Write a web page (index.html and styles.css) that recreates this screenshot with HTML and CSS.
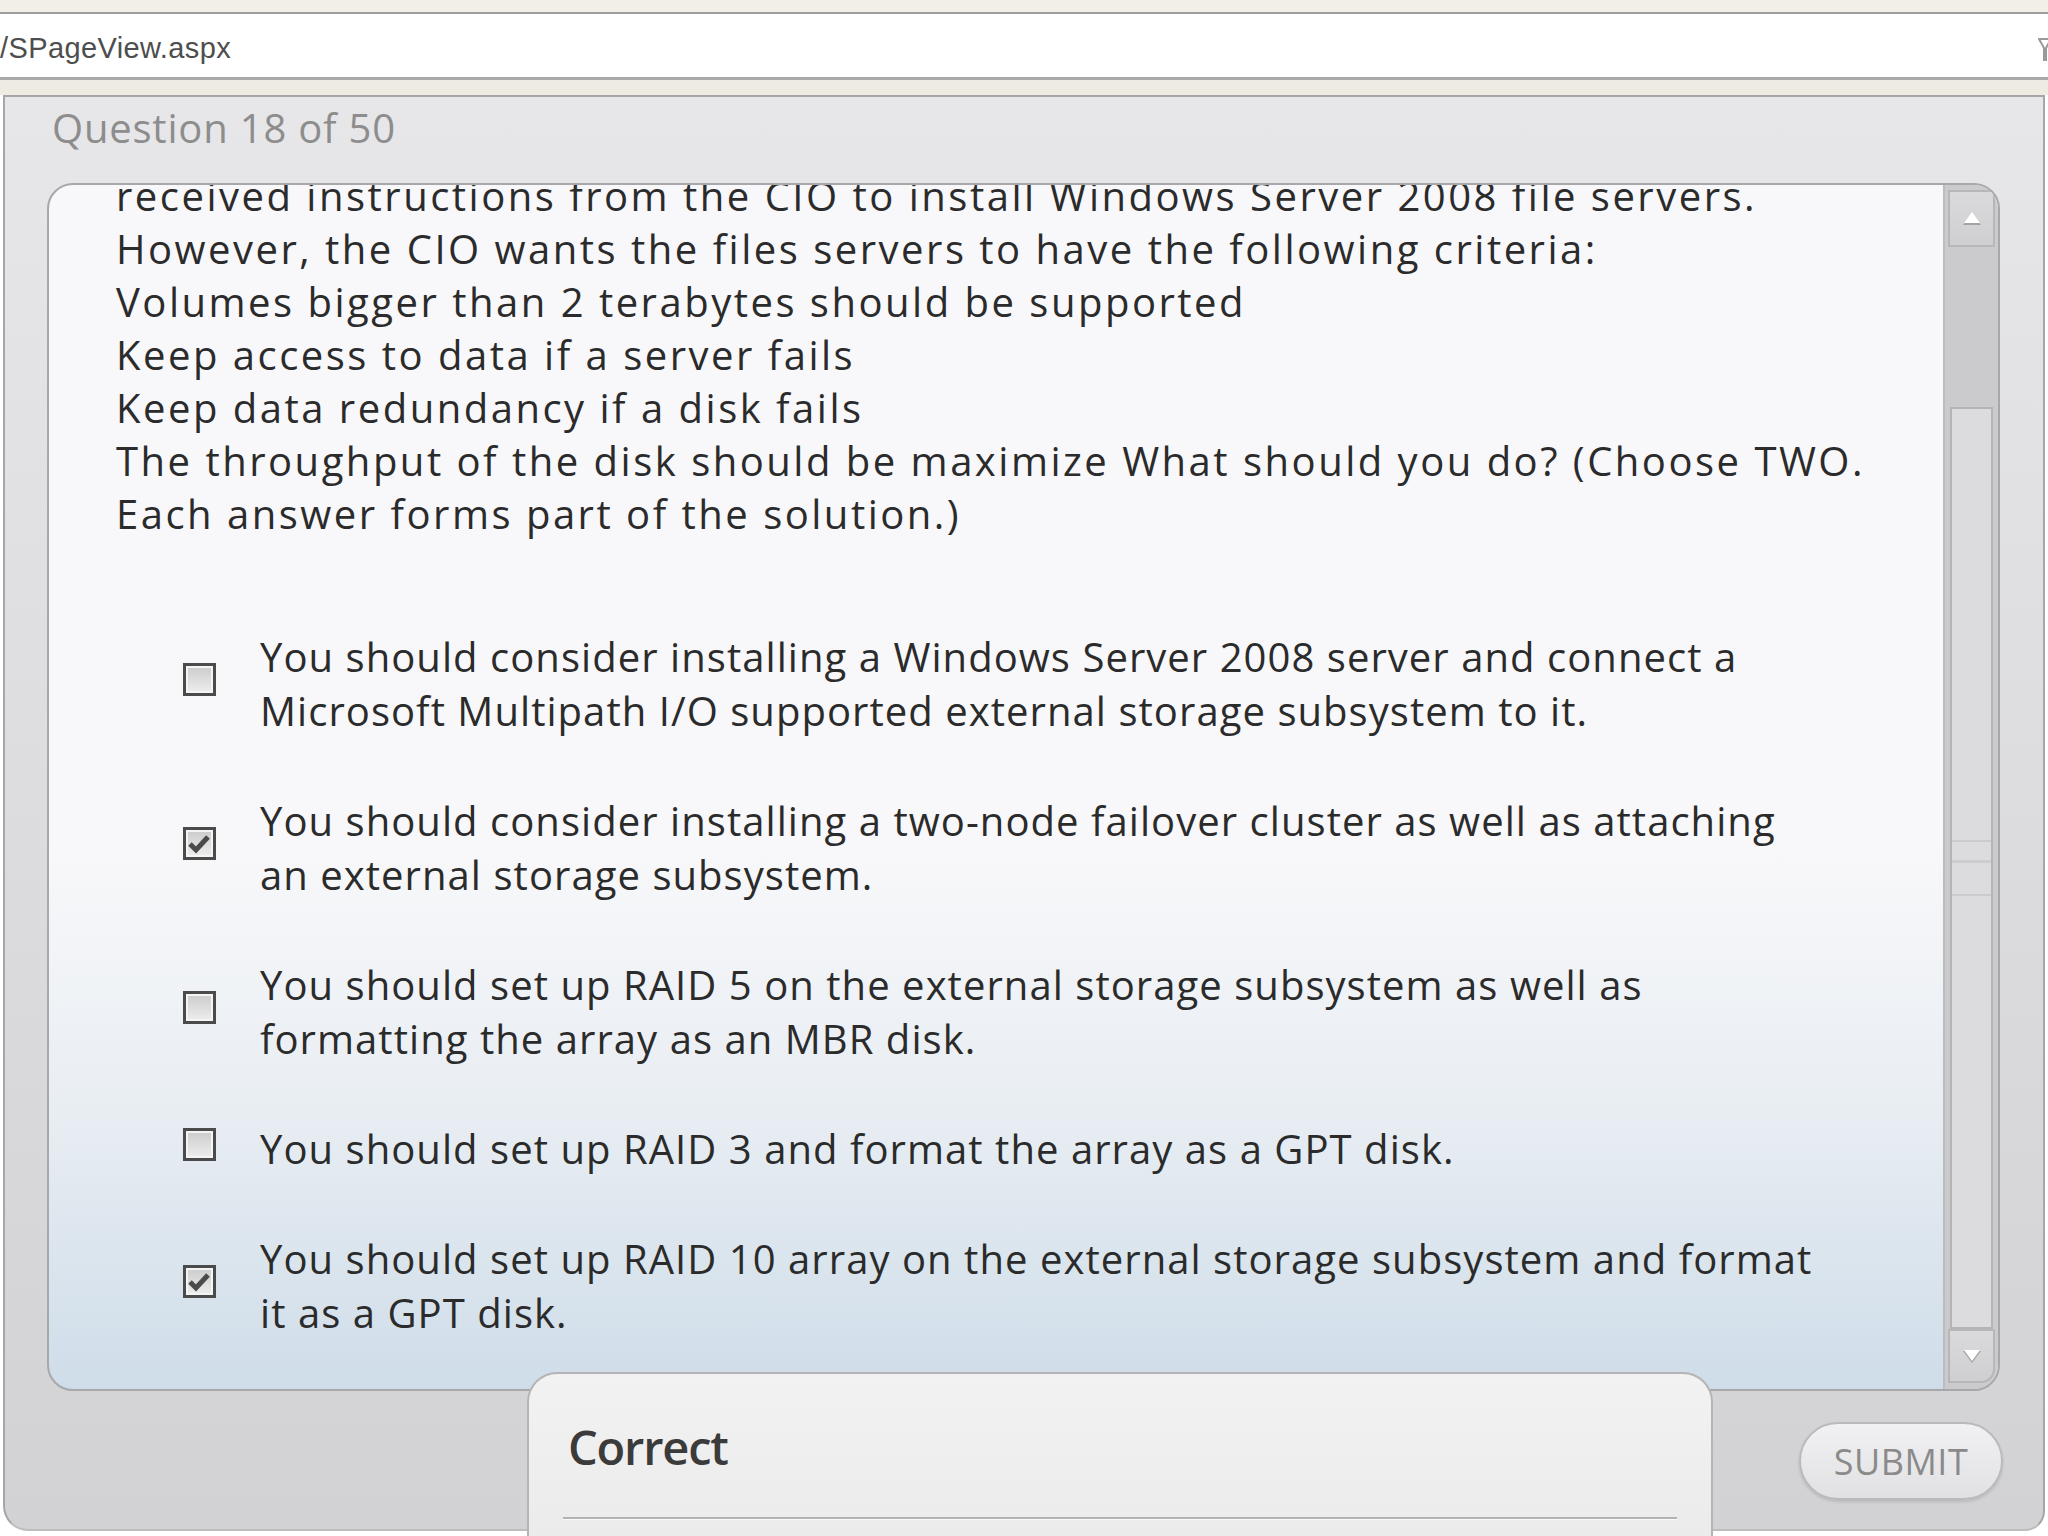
FILE: index.html
```html
<!DOCTYPE html>
<html lang="en">
<head>
    <meta charset="UTF-8">
    <meta name="viewport" content="width=device-width, initial-scale=1.0">
    <title>Question 18 of 50</title>
    <link rel="stylesheet" href="styles.css">
</head>
<body>
  <div class="topstrip"></div>
  <div class="addressbar">
    <span class="url">/SPageView.aspx</span>
    <svg class="funnel" width="14" height="26" viewBox="0 0 14 26">
      <path d="M1 3 L13 3 L8 12 L8 24 L6 24 L6 12 Z" fill="none" stroke="#9a9a9a" stroke-width="2"/>
    </svg>
  </div>
  <div class="strip"></div>

  <div class="panel">
    <div class="qnum">Question 18 of 50</div>

    <div class="qbox">
      <div class="qview">
        <div class="qtext">
          received instructions from the CIO to install Windows Server 2008 file servers.<br>
          However, the CIO wants the files servers to have the following criteria:<br>
          Volumes bigger than 2 terabytes should be supported<br>
          Keep access to data if a server fails<br>
          Keep data redundancy if a disk fails<br>
          The throughput of the disk should be maximize What should you do? (Choose TWO.<br>
          Each answer forms part of the solution.)
        </div>

        <ul class="answers">
          <li class="answer">
            <span class="check"></span>
            <span class="label">You should consider installing a Windows Server 2008 server and connect a<br>Microsoft Multipath I/O supported external storage subsystem to it.</span>
          </li>
          <li class="answer">
            <span class="check">
              <svg width="27" height="27" viewBox="0 0 27 27"><path d="M4 14 L10 20 L22 7" fill="none" stroke="#4a4a4a" stroke-width="5"/></svg>
            </span>
            <span class="label">You should consider installing a two-node failover cluster as well as attaching<br>an external storage subsystem.</span>
          </li>
          <li class="answer">
            <span class="check"></span>
            <span class="label">You should set up RAID 5 on the external storage subsystem as well as<br>formatting the array as an MBR disk.</span>
          </li>
          <li class="answer">
            <span class="check"></span>
            <span class="label">You should set up RAID 3 and format the array as a GPT disk.</span>
          </li>
          <li class="answer">
            <span class="check">
              <svg width="27" height="27" viewBox="0 0 27 27"><path d="M4 14 L10 20 L22 7" fill="none" stroke="#4a4a4a" stroke-width="5"/></svg>
            </span>
            <span class="label">You should set up RAID 10 array on the external storage subsystem and format<br>it as a GPT disk.</span>
          </li>
        </ul>
      </div>

      <div class="scrollbar">
        <div class="sb-btn">
          <svg width="22" height="16" viewBox="0 0 22 16"><path d="M11 2 L20 14 L2 14 Z" fill="#a4a4a6"/><path d="M11 1 L19 12 L3 12 Z" fill="#fff"/></svg>
        </div>
        <div class="sb-track"></div>
        <div class="sb-thumb"><span class="grip"></span></div>
        <div class="sb-btn down">
          <svg width="22" height="16" viewBox="0 0 22 16"><path d="M2 3 L20 3 L11 15 Z" fill="#a4a4a6"/><path d="M3 2 L19 2 L11 13 Z" fill="#fff"/></svg>
        </div>
      </div>
    </div>

    <div class="footer">
      <button class="submit" type="button">SUBMIT</button>
    </div>

    <div class="feedback">
      <div class="feedback-title">Correct</div>
      <div class="feedback-rule"></div>
    </div>
  </div>
</body>
</html>
```

FILE: styles.css
```css
html, body {
  margin: 0;
  height: 1536px;
  overflow: hidden;
  background: #fff;
  font-family: "Open Sans", sans-serif;
}

.topstrip {
  height: 12px;
  background: #f1efe7;
  border-bottom: 2px solid #9e9e9e;
}

.addressbar {
  height: 63px;
  background: #fff;
  border-bottom: 3px solid #a9a9a9;
  display: flex;
  align-items: center;
  justify-content: space-between;
}

.url {
  font-family: "Liberation Sans", sans-serif;
  font-size: 29px;
  letter-spacing: 0.4px;
  color: #4e4e4e;
  padding-top: 5px;
}

.funnel {
  margin-right: -4px;
  margin-top: 6px;
}

.strip {
  height: 15px;
  background: #eeece2;
}

.panel {
  position: relative;
  margin: 0 3px;
  border: 2px solid #a6a6a8;
  border-bottom-color: #bdbdbf;
  border-radius: 0 0 20px 25px;
  background: linear-gradient(#e7e7e9, #d2d2d4);
  padding: 4px 0 29px;
}

.qnum {
  font-size: 40px;
  line-height: 54px;
  letter-spacing: 0.8px;
  color: #8d8d8d;
  padding-left: 47px;
}

.qbox {
  margin: 28px 43px 0 42px;
  height: 1208px;
  box-sizing: border-box;
  border: 2px solid #a8a8aa;
  border-radius: 26px;
  overflow: hidden;
  display: flex;
  background: linear-gradient(#f8f8fa 0%, #f8f8fa 55%, #e9eef3 76%, #cfdde9 100%);
}

.qview {
  flex: 1;
  overflow: hidden;
  padding-left: 67px;
  color: #2b2b2b;
  font-size: 40px;
}

.qtext {
  margin-top: -16px;
  line-height: 53px;
  letter-spacing: 2.5px;
  white-space: nowrap;
}

.answers {
  list-style: none;
  margin: 90px 0 0 67px;
  padding: 0;
  display: flex;
  flex-direction: column;
  gap: 56px;
  line-height: 54px;
  letter-spacing: 1.05px;
}

.answer {
  display: flex;
  align-items: center;
  gap: 44px;
}

.check {
  flex: none;
  width: 33px;
  height: 33px;
  box-sizing: border-box;
  margin-bottom: 10px;
  border: 3px solid #4b4b4b;
  background: linear-gradient(#cbcbcb, #eeeeee);
  box-shadow: inset 0 0 0 2px #f4f4f4;
  display: flex;
}

.check svg {
  display: block;
}

.label {
  white-space: nowrap;
}

.scrollbar {
  flex: none;
  width: 55px;
  box-sizing: border-box;
  border-left: 2px solid #bcbcbe;
  background: #cbcbcd;
  display: flex;
  flex-direction: column;
  padding: 5px 3px 6px;
}

.sb-btn {
  height: 57px;
  box-sizing: border-box;
  border: 2px solid #b7b7b9;
  background: linear-gradient(#dadadc, #cfcfd1);
  display: flex;
  align-items: center;
  justify-content: center;
}

.sb-btn.down {
  height: 54px;
  border-radius: 0 0 14px 0;
}

.sb-track {
  height: 160px;
}

.sb-thumb {
  flex: 1;
  margin: 0 2px;
  border: 2px solid #b4b4b6;
  background: #dcdcde;
  display: flex;
  align-items: center;
}

.grip {
  width: 100%;
  height: 52px;
  border-top: 2px solid #cbcbcd;
  border-bottom: 2px solid #cbcbcd;
  background: linear-gradient(transparent 34%, #cdcdcf 34%, #cdcdcf 40%, transparent 40%);
}

.footer {
  display: flex;
  justify-content: flex-end;
  margin: 31px 40px 0 0;
}

.submit {
  width: 204px;
  height: 78px;
  padding: 0;
  border: 2px solid #bababc;
  border-radius: 39px;
  background: linear-gradient(#f1f1f3, #e1e1e3);
  box-shadow: 0 2px 3px rgba(0, 0, 0, 0.12);
  color: #8a8a8a;
  font-family: "Open Sans", sans-serif;
  font-size: 36px;
  letter-spacing: 0.5px;
  cursor: pointer;
}

.feedback {
  position: absolute;
  left: 522px;
  top: 1275px;
  width: 1186px;
  height: 220px;
  box-sizing: border-box;
  padding: 50px 34px 0;
  border: 2px solid #b5b5b7;
  border-bottom: none;
  border-radius: 30px 30px 0 0;
  background: linear-gradient(#f2f2f2, #e9e9eb);
}

.feedback-title {
  padding-left: 5px;
  font-size: 47px;
  font-weight: 600;
  line-height: 47px;
  letter-spacing: -1.2px;
  color: #3b3b3b;
}

.feedback-rule {
  margin-top: 46px;
  border-top: 2px solid #b3b3b5;
  border-bottom: 1px solid #fafafa;
}
```
